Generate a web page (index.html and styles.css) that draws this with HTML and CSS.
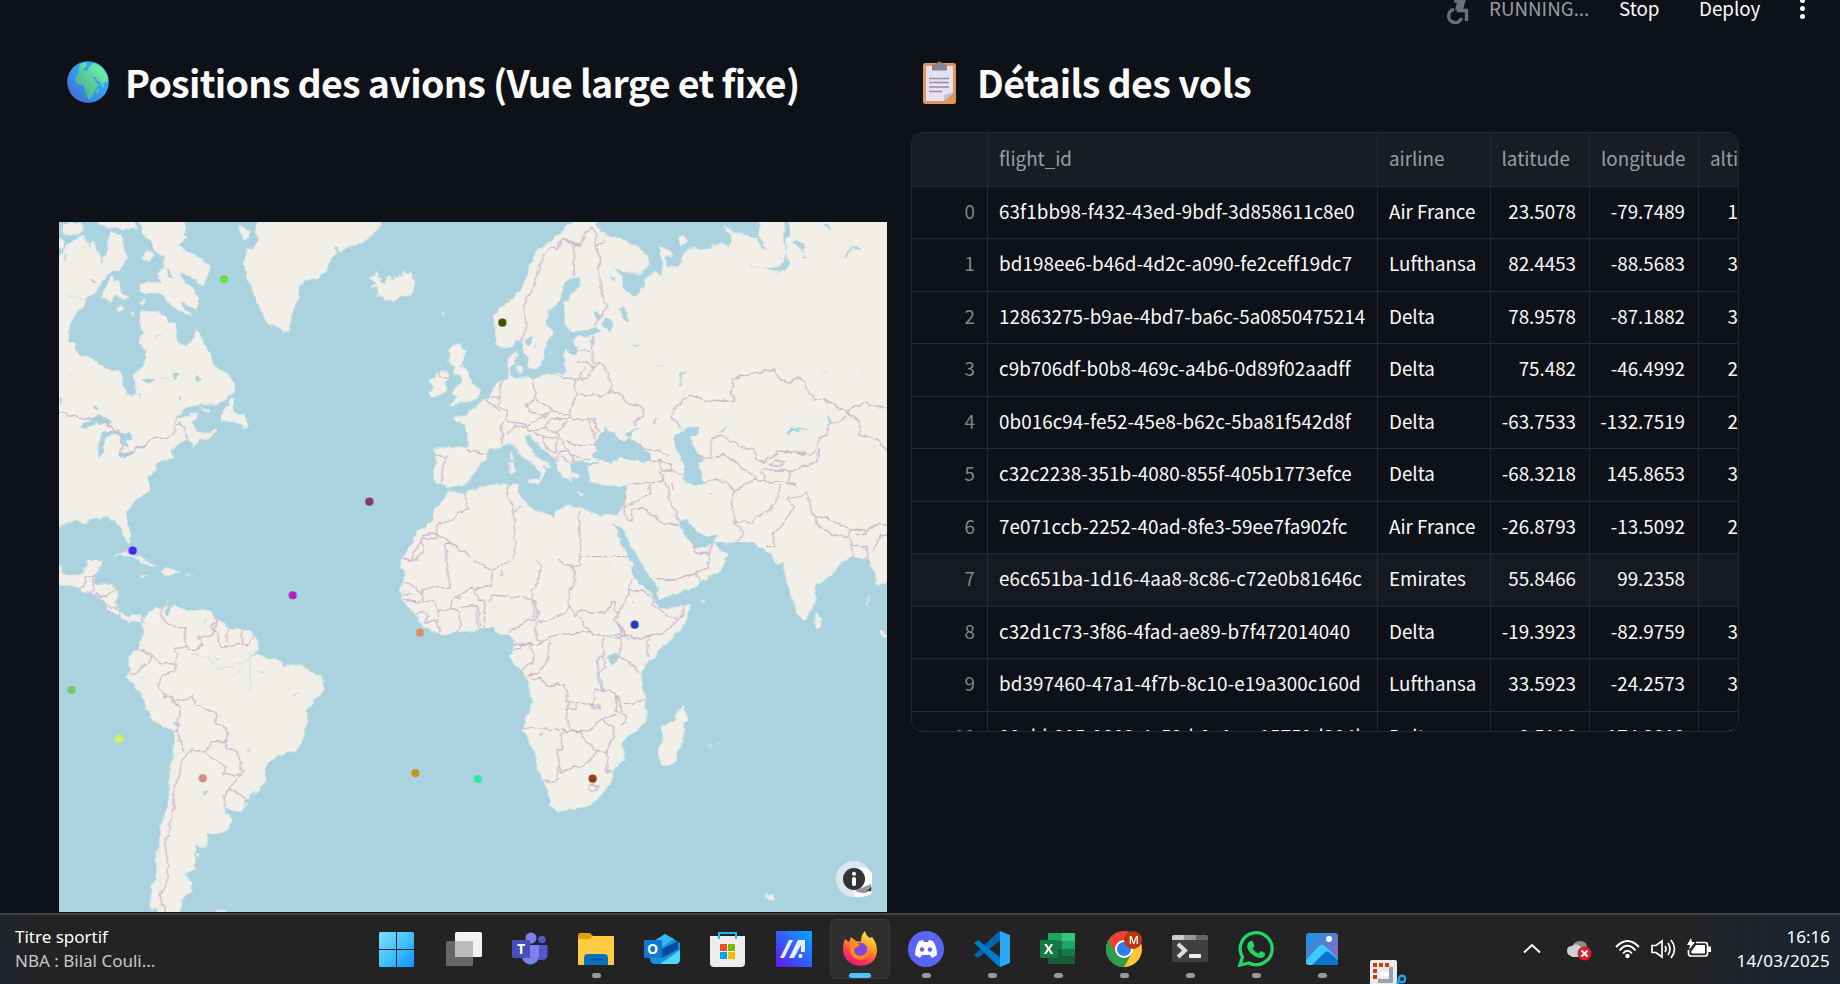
FILE: index.html
```html
<!DOCTYPE html>
<html lang="fr">
<head>
<meta charset="utf-8">
<title>Suivi des vols</title>
<link rel="stylesheet" href="styles.css">
</head>
<body>
<div class="screen">
<header class="toolbar">
  <svg class="runner" width="28" height="24" viewBox="0 0 28 24"><g fill="none" stroke="#6e6f75" stroke-width="3.4"><path d="M9 9.500A6.600 6.600 0 1 0 16.500 18"/><path d="M9 1L18.500 1 14 10.500H21.500V21"/></g><path d="M13-1h8l-3 11h-8z" fill="#6e6f75"/></svg>
  <span class="running">RUNNING...</span><span class="stop">Stop</span><span class="deploy">Deploy</span>
  <span class="dots"><i></i><i></i><i></i></span>
</header>
<main class="columns">
  <section>
    <h2 class="heading">
      <svg width="42" height="42" viewBox="0 0 42 42"><defs><linearGradient id="sea" x1="1" y1="0" x2="0" y2="1"><stop offset="0" stop-color="#35b8ff"/><stop offset=".5" stop-color="#309dee"/><stop offset="1" stop-color="#4b5fce"/></linearGradient><linearGradient id="soil" x1="1" y1="0" x2="0" y2="1"><stop offset="0" stop-color="#75ffae"/><stop offset="1" stop-color="#479f89"/></linearGradient></defs><circle cx="21" cy="21" r="20.800" fill="url(#sea)"/><path d="M13 3l6-2 1 4-3 2-2 4-4 2zM22 6l5-4q10 3 14 15l-1 4-4 1-2-3-2 2-4-5-5-1-2 2-2-2-4 1-3-2 4-5 4 1zM10 14l5-2 8 2 5 5 1 3 3 1-4 6-2 5-4 5-4-8-1-7-7-1-2-4zM31 27l1 2-2 4-1-2zM35 18l2 7-1 2-3-7z" fill="url(#soil)"/></svg>
      <span class="t1">Positions des avions (Vue large et fixe)</span>
    </h2>
    <div class="map">
    <svg width="828" height="690" viewBox="27 21 2484 2070">
      <defs>
        <clipPath id="upper"><path d="M0 0H2540V1036H0z"/></clipPath>
        <clipPath id="lower"><path d="M0 0H2540V1080H0z"/></clipPath>
        <filter id="rough" filterUnits="userSpaceOnUse" x="0" y="0" width="2540" height="2120" color-interpolation-filters="sRGB"><feTurbulence type="fractalNoise" baseFrequency=".045" numOctaves="2" seed="4"/><feDisplacementMap in="SourceGraphic" scale="17" xChannelSelector="R" yChannelSelector="G"/></filter>
      </defs>
      <rect x="27" y="21" width="2484" height="2070" fill="#aad3df"/>
      <g filter="url(#rough)">
      <g class="land" clip-path="url(#upper)">
        <path d="M262 5L398 5 410 45 402 58 412 72 385 90 405 108 440 120 460 138 484 160 472 190 458 212 440 200 425 190 400 175 385 172 392 190 420 210 447 250 442 285 430 280 400 262 388 262 425 298 400 292 360 272 350 250 325 230 285 235 270 222 272 208 300 202 335 205 325 185 318 178 345 155 340 130 320 110 300 80 280 60z"/>
        <path d="M10 140L40 110 50 90 75 70 100 60 112 75 115 100 125 75 140 95 155 140 165 120 175 85 178 55 190 50 215 60 220 90 230 130 215 160 185 170 165 185 150 210 135 235 110 245 108 262 80 295 60 330 55 380 75 385 85 420 120 425 160 455 185 465 215 468 218 510 232 535 247 550 262 535 257 500 250 475 275 460 288 435 285 405 265 385 278 355 270 325 270 287 325 290 345 305 355 325 378 325 380 365 405 392 430 375 440 340 455 370 478 410 490 450 535 480 553 500 555 530 530 550 500 568 450 570 415 575 385 605 365 630 400 605 440 592 445 605 428 620 440 645 465 655 485 650 495 635 502 650 480 665 450 675 428 697 424 680 410 670 385 688 365 705 372 730 345 735 320 745 315 770 295 785 300 825 275 845 250 860 228 890 232 920 243 960 240 985 222 965 210 935 190 915 170 908 130 910 105 925 75 915 50 925 10 952z"/>
        <path d="M10 60L35 72 42 85 38 100 10 98zM38 30L60 21 90 24 97 40 85 58 60 60 38 50zM133 5H255L262 45 240 38 225 45 200 38 175 38 150 32zM185 180L170 205 155 248 167 250 180 267 195 240 222 254 240 248 215 235 205 195 195 198zM198 280L215 270 220 282 204 292zM243 290L253 290 250 306 243 302zM283 115L292 103 308 112 308 125 296 142 280 130zM268 260L285 252 287 260 272 268z"/>
        <path d="M555 545L545 550 515 605 512 621 540 620 567 625 580 630 575 640 592 638 595 625 585 610 582 598 565 595 552 592 545 580zM445 578L475 585 480 592 462 590z"/>
        <path d="M625 5L1000 5 985 40 940 82 905 95 870 112 852 93 857 115 845 128 830 165 800 190 765 195 750 215 750 240 735 270 722 310 715 352 700 350 680 330 655 332 635 295 612 240 600 205 585 180 582 130 590 98 612 100 625 70 615 55zM565 38L578 30 600 50 598 64 585 72 568 60z"/>
        <path d="M958 192L975 178 982 167 985 182 998 190 990 200 1003 210 1015 178 1025 192 1035 182 1040 190 1050 180 1058 186 1063 165 1075 180 1082 172 1090 190 1095 207 1090 225 1070 243 1045 250 1030 260 1005 252 998 245 978 245 985 235 980 215 962 218 965 208 980 208 968 195z"/>
        <path d="M1172 465L1190 468 1196 485 1188 505 1190 530 1165 540 1145 545 1137 532 1148 515 1140 507 1140 490 1160 490 1160 475zM1210 390L1230 385 1232 402 1247 407 1240 435 1228 450 1250 460 1260 490 1275 510 1290 520 1288 545 1260 560 1230 565 1198 573 1210 555 1222 545 1203 537 1218 515 1235 500 1230 480 1208 474 1215 455 1195 440 1202 415 1198 402z"/>
        <path d="M1262 585L1250 590 1247 602 1212 605 1215 615 1240 630 1255 655 1255 690 1245 698 1165 697 1152 705 1158 735 1150 770 1157 803 1175 806 1195 820 1215 815 1242 808 1262 790 1285 755 1310 735 1312 705 1350 700 1375 685 1392 690 1405 715 1425 730 1445 748 1465 762 1472 782 1462 800 1478 790 1485 768 1480 752 1500 760 1495 742 1475 740 1455 715 1430 690 1427 665 1440 662 1460 682 1490 710 1515 730 1525 765 1535 780 1550 795 1567 800 1560 785 1590 795 1590 780 1565 770 1560 745 1575 740 1605 742 1615 770 1620 800 1660 815 1685 808 1710 820 1725 812 1728 850 1710 888 1695 897 1645 900 1610 885 1550 870 1520 890 1512 910 1450 880 1410 850 1405 830 1405 810 1375 808 1340 805 1260 825 1250 838 1205 830 1195 825 1185 850 1150 885 1145 920 1105 950 1075 1000 1052 1037 1052 1050 2530 1050 2530 5 2390 5 2215 5 2220 65 2205 75 2215 145 2205 165 2180 175 2145 160 2190 155 2210 120 2200 75 2205 5 2130 5 2125 65 2150 100 2145 105 2120 75 2085 55 2050 52 2020 30 2030 50 2045 60 2035 100 2025 85 1990 92 1960 105 1930 95 1905 110 1890 145 1875 155 1850 150 1845 125 1870 125 1860 105 1835 95 1830 100 1835 140 1835 180 1815 170 1785 195 1785 210 1770 225 1760 245 1730 235 1715 210 1715 185 1690 155 1720 170 1775 178 1797 150 1790 120 1765 95 1725 75 1665 60 1635 30 1650 5 1575 5 1545 40 1500 80 1460 105 1435 165 1420 210 1380 260 1345 280 1330 310 1340 370 1345 395 1370 402 1400 375 1415 380 1420 410 1435 430 1438 460 1455 460 1475 445 1485 410 1490 385 1512 350 1490 335 1493 290 1530 255 1543 205 1560 187 1590 190 1590 210 1560 245 1542 265 1545 335 1570 350 1640 340 1650 350 1620 362 1580 362 1570 375 1575 395 1583 400 1580 420 1560 415 1550 400 1540 425 1545 475 1505 475 1475 480 1455 495 1430 485 1400 490 1380 480 1380 460 1395 440 1405 410 1375 430 1375 490 1340 505 1320 545 1295 560z"/>
        <path d="M1480 790L1430 795 1440 805 1465 810zM1378 745L1390 738 1393 770 1378 775zM1385 708L1390 728 1382 734 1380 715zM1575 830L1605 835 1590 840zM1688 838L1705 832 1700 842 1692 844zM1400 450L1420 455 1415 475 1400 465zM188 1025L220 1010 270 1025 335 1055 280 1045 250 1025 205 1022zM110 1050L125 1037H155V1050z"/>
        <path d="M1885 68L1895 64 1912 75 1905 88 1890 90zM1175 290l10-2-2 20zM1505 405l-8 15 4-2z"/>
      </g>
      <g class="land" transform="translate(0 1035)" clip-path="url(#lower)">
        <path d="M5 -10L27 14 40 40 75 45 103 35 115 0V-8H157V0L150 30 135 45 133 72 185 75 203 90 197 130 205 150 235 175 250 160 272 165 280 185 240 185 235 188 210 175 205 165 172 150 170 135 145 108 90 90 70 78 27 75 5 70z"/>
        <path d="M262 -5L290 5 320 18 305 20 270 5zM268 42L292 45 275 50zM335 38L350 22 370 28 392 40 360 42 350 48zM410 42L428 44 412 48z"/>
        <path d="M275 185L300 155 315 145 335 145 355 122 350 140 345 155 355 165 362 150 370 133 400 147 440 150 480 152 495 175 525 190 540 207 595 208 615 235 630 265 605 290 620 283 650 290 695 305 700 317 760 318 800 345 818 350 824 385 800 415 772 450 770 500 758 540 740 573 690 585 655 610 647 630 648 660 620 700 585 745 570 758 520 745 535 765 544 790 530 812 500 822 475 822 472 855 455 862 437 855 435 925 410 935 405 945 427 970 425 990 400 1015 385 1070H325L318 1010 325 900 330 800 355 730 360 620 372 580 370 518 300 475 290 445 262 390 230 350 238 330 235 290 265 260 280 235z"/>
        <path d="M320 870h8l4 180h-28l-2-70 15-20zM440 880l14 2-8 10zM495 1052h32v14h-32z"/>
        <path d="M1052 -8V0L1063 45 1050 90 1060 125 1100 165 1105 185 1140 210 1175 224 1215 215 1275 218V-8z"/>
      </g>
      <g class="land" transform="translate(1260 1035)" clip-path="url(#lower)">
        <path d="M-12 -8H487L488 45 510 70 540 95 560 125 570 147 620 140 663 130 655 165 630 215 590 250 540 300 515 340 515 380 527 420 530 480 510 500 455 545 465 600 430 622 425 665 380 720 350 740 300 748 262 757 240 735 240 710 220 665 205 640 192 575 160 510 168 465 185 440 178 390 165 345 123 300 133 250 133 235 118 222 85 225 70 203 30 205-12 217z"/>
        <path d="M510 0V-8H768V0L750 35 690 65 680 80 570 120 565 118 557 70 530 40zM903 0V-8H1122V0L1100 30 1050 70 1035 80 1035 130 1015 165 1000 180 985 165 962 110 943 50 940 5 920 10zM1037 158L1055 180 1055 198 1035 206 1030 190zM1192 -8V0L1215 40 1220 75 1235 75 1265 60V-8zM1228 208L1265 232V242L1235 225zM642 437L655 480 645 485 640 530 615 605 600 620 580 618 568 605 563 570 578 540 573 500 615 480 625 455zM692 120l12 0-2 5-10 0zM888 1002l20 2 4 12-24 2zM714 558l12 0-6 5zM742 544l8 3-8 5zM1196 105l4 5-6 28-3-3z"/>
      </g>
      <g class="water">
        <path d="M378 325L420 322 440 340 432 370 405 392 385 378zM90 638L115 615 145 598 185 615 185 630 140 625 105 640zM145 675L165 650 205 645 210 655 165 668 162 710 150 730 145 710zM205 650L245 660 245 675 230 675 232 695 215 690zM205 720L240 708 258 712 225 728 210 732zM252 698L292 685 290 693 262 702zM130 572l12 0-2 14-8 0zM30 545l8 12-8 12zM368 475l18 2-5 15-12 0zM430 490l14-8 12 12-18 8zM275 492l38 0-20 14zM350 155l25 35-20-5zM115 185l25 18-8 2zM440 650l25-60 30 30 5 20-28 10zM45 115l5 15-8 10zM385 545l8 0 0 14-8-4zM265 535l10 3-8 12z"/>
        <path d="M1625 730L1640 705 1635 690 1648 660 1665 640 1690 650 1705 665 1700 672 1715 680 1740 670 1725 660 1770 630 1745 658 1738 672 1770 690 1800 715 1803 735 1785 740 1735 735 1710 725 1680 740zM1875 660L1910 638 1947 635 1945 658 1925 665 1930 690 1950 722 1968 740 1945 745 1960 785 1960 808 1930 812 1895 795 1905 755 1885 715 1870 680zM1605 742H1650L1640 750 1610 752 1615 810 1725 812 1725 850 1600 840 1570 805 1590 790 1600 775zM1655 330L1665 308 1685 312 1690 330 1680 348 1660 340zM1710 280L1722 275 1735 310 1732 322 1712 305zM1425 375l20-8 4 4-12 20-8 0zM1450 390l8-2-4 15zM1620 375l7 0-2 25zM1630 290l14 0 10 15-10 15-8-18zM1678 180l18 8-4 10zM1745 385l20 5 2 5-10 0zM2208 655L2222 640 2282 642 2225 650 2215 665zM2240 715l30-2-10 8zM1885 920L1910 915 1935 945 1970 965 2000 958 2000 975 1965 995 1935 1000 1920 980 1890 940zM1990 980L2080 985 2105 980 2170 1020 2170 1037H2020L2035 1020 1995 990zM1690 925L1715 940 1770 1037H1740L1705 965zM2380 1037L2400 1030 2450 1025 2445 1037zM2245 75L2260 85 2262 125 2275 132 2255 105 2225 85zM2385 125l18-35 2 10-18 32zM2405 95l35 5-20 8zM2320 24l20 5-2 18zM1890 470l22-6-15 15-6 18 4 18-8-5zM1810 615l14-8-14 22zM2000 655l14-14 20 0-20 8zM1980 832l10 3-5 5zM2450 565l12 3-5 8zM2330 595l10 20 15 8-20 0z"/>
        <path d="M348 1183l12 5-3 18-10-5zM375 1515l12 15-10 2zM458 1728l15 0-2 12-12-4zM500 1333l8 2-4 6zM628 1367l10 5-3 5zM725 1440l22-3-15 7zM590 1612l12-12-6 14zM580 1760l40-35-20 45-15-8zM460 1216l8 2-5 8zM1470 1555l16 3-12 6zM1743 1160l8 2-6 5zM1675 1320l28-8 5 15-20 22-15-10zM1644 1320q2 70 22 105l-6-2q-20-35-16-103zM1700 1440l8 0 10 55-6-5zM1730 1260l10 22-8-10z"/>
      </g>
      <path class="river" d="M425 1317q65 10 70 35t70-8l70-30M595 1335l-60 60M600 1310v120M430 470l18 16M335 490l30 6M315 365l18-5M55 480l12-4M395 340l8 4M40 235l60 20M2095 150l35 8M1820 455l28-8M1840 430l20-15M2310 480l20-12M2440 465l-8 22M1625 200l20 20M1655 1290q-5-20 12-35M1675 1400l12 8M1685 1045l-10 15"/>
      <g class="edge" clip-path="url(#upper)">
        <path d="M10 594H50L62 602 90 610 140 608 185 640 215 665 218 700 205 725 225 722 255 710 260 695 290 690 308 670H350L370 655 380 630 390 626 403 632 405 660 410 668M1170 465L1175 490 1190 494M1155 720L1187 725 1177 760 1175 803M1245 838L1253 880 1225 895 1200 915 1160 930V970H1115L1083 1033H1052M1118 958L1160 955 1262 1024M1118 960V1005L1100 1033M1250 705L1305 716M1187 985L1192 1050M1187 985H1205"/>
        <path d="M1410 378L1428 345 1423 270 1430 240 1447 230 1480 120 1510 96 1525 100 1538 70 1570 88 1573 180M1538 70L1565 88 1595 90 1605 50 1625 40 1640 55 1637 100 1652 130 1645 150 1655 235 1670 275 1632 335M1628 365L1626 440 1660 448 1665 460 1685 510 1680 530M1580 442L1605 440 1628 455 1655 445M1620 410L1585 405M1605 455L1590 490 1570 493 1525 482M1570 493L1580 535 1560 595M1590 495L1620 480 1630 455M1580 540L1625 540 1660 548 1675 532 1700 530 1725 560 1780 580 1780 605 1755 618 1755 630M1450 490L1457 550 1428 570 1435 590 1480 600 1505 590 1560 600 1555 610 1605 612 1620 610 1650 650M1457 555L1490 570 1508 588M1355 500L1345 575 1370 590 1365 620 1395 622 1435 630 1490 600M1300 550L1350 588M1325 545L1348 548M1355 690L1358 650 1350 640 1360 622M1395 632L1380 650 1370 655M1395 635L1430 635 1440 650 1485 640 1500 612 1555 610M1485 640L1520 655 1555 615M1475 665L1490 700 1518 715 1520 670 1475 665 1440 645M1520 655L1560 715 1620 735M1520 740L1530 710 1555 705M1535 720L1550 740 1570 738 1558 710M1545 680L1590 695 1640 685 1628 655 1615 610M1630 612L1640 650 1630 662M1740 808L1840 800 1840 780 1825 765M1730 810L1720 880 1735 920 1750 910 1745 885 1770 875 1845 928H1885M1800 808L1798 840 1730 875M1845 800L1860 840 1855 855 1880 890 1888 925M1780 698L1820 705 1860 725M1805 735L1865 745 1860 765 1895 780M1828 740L1835 765 1865 765M1865 805L1870 825M1895 642L1880 625 1865 605 1875 575 1920 540 1980 560 2010 555 2055 560 2040 540 2050 510 2050 490 2160 465 2175 465 2185 485 2210 505 2250 485 2295 555 2320 550 2390 590 2440 562 2485 575 2525 582M1390 1030L1395 990 1390 870 1370 850 1375 808M1395 890L1415 870M1588 890L1590 1037M1590 1025H1740M1940 720L1970 730 1985 725V670L2020 660 2070 695 2110 700 2120 730 2145 745 2150 730 2180 720 2180 708 2295 715 2305 670 2330 660 2335 630 2370 620 2385 600M1960 802L1995 790 2030 805 2055 830 2110 795 2145 800 2190 800 2235 810M1990 730L2020 715 2060 745 2120 790M2135 770L2145 795M2140 765L2215 765 2220 775 2215 800 2240 820M2160 750L2175 735 2205 742 2190 755 2160 750M2055 830L2045 860 2055 920 2110 920 2120 905 2160 885 2185 850 2190 810M2055 920L2080 960 2060 980M2150 995H2175L2165 955 2190 940 2230 880 2215 850 2250 845 2270 830 2280 885 2300 905 2340 912 2400 945 2450 940 2490 925 2525 935M2300 905L2295 925 2350 960 2395 965 2400 945M2400 965L2410 1035M2400 985L2450 1000 2455 1037M2415 945L2445 942 2445 960 2415 958M2470 1010L2490 960 2525 955M2220 770L2300 740 2310 700M2385 590L2430 620 2430 660 2480 675 2525 720M1925 985L1940 1015H1978L1985 985M1940 1015L1980 1022 1975 1050M1635 95L1665 75"/>
      </g>
      <g class="edge" transform="translate(0 1035)">
        <path d="M103 48H135M105 48L108 70 88 90M130 50V85L118 102M135 100L155 110 200 90M175 140L200 145M208 170L210 158M275 180L282 185M352 130L335 145 333 165 345 190 370 195 380 203H407L403 235 410 262 375 265 380 290 375 335 340 345 322 380 345 410 365 408 368 425 400 420 430 408 435 435 495 458 498 490 520 492 533 520 528 545H480L468 575 440 575 425 568 410 585 395 600 393 640 375 670 370 700 375 745 358 780 360 810 348 850 345 880 355 915 350 965 330 1005 335 1035 345 1040V1070M260 265L305 285 300 305 265 330 260 342 240 340M305 285L335 310 375 312M368 425L388 440 382 510 370 518M382 510L395 560 402 580M468 575L490 600 530 620 520 640 550 650 570 640 575 600 555 570H530V540M575 625L582 635 538 685 525 705 520 740M538 685L565 700 590 720 582 740M407 262L430 270 460 250 442 232 490 225 500 175 485 200 490 215 505 220 505 250 515 265 550 255 600 250 610 228M540 205L530 220 530 245M575 208V250M1052 0H1105M1190 0L1200 82 1120 85 1115 105 1080 70 1060 68M1115 90L1120 125 1060 118M1058 103H1090M1125 125L1155 125 1165 150 1225 150 1230 160 1230 215M1165 150L1160 190 1172 210 1170 222M1100 160L1120 155 1133 165 1128 190 1150 180 1165 188M1200 150L1210 120 1262 85M1230 140H1262M1355 30V45"/>
      </g>
      <g class="edge" transform="translate(1260 1035)">
        <path d="M10 0L65 32 120 0M65 32L60 75 10 90 25 120 50 125 40 165 42 200M0 85H10M0 138H18L20 205M25 140L30 200M55 125L65 105 185 115 195 155 190 180 155 190 120 215M200 0L210 15 205 65 185 95 190 120 205 155 195 200 200 235 215 250M260 0L313 22V75L297 95V130L315 170 330 150 370 160 395 155 405 160 425 125 435 125 435 150 445 160 435 180 470 225M205 185L260 175 300 140M325 170L370 225 465 225 510 238 585 215 638 160V135M330 0V18H313M445 160L475 105 480 60 500 50M475 95L520 90 545 110 555 125 545 135 620 180M540 235L532 250 535 290M133 253H208L245 230 270 220 365 215M135 268L155 265 155 253H180L190 275 190 305 155 330M245 235L235 290 205 340 170 345M170 355H215L232 383 265 370 285 375 295 425 340 430 385 435 388 450 370 440 375 390 400 390 385 365 380 300 400 290 400 235M400 235H450L455 225 455 250 445 290 490 315 510 340M410 293L445 290M400 295L405 325 385 340M455 430L490 430 525 418M400 390L440 400 435 455 465 465 465 490 450 495M440 400L455 455M295 445V425M318 425V448H290V480L305 512 355 512 395 480 430 500 430 530 410 575 415 640 405 630 410 620 425 635 405 642M160 503L290 512M275 515V570H265L263 660 250 670 220 658M278 515L330 515 350 545 385 572 410 575M265 610L275 640 310 618 340 620 385 572M355 680L370 670 385 680 370 695 355 685M395 475L440 465M560 55L615 60 675 38 690 65M675 38L715 20V0M460 225L440 190M1190 0L1200 12"/>
      </g>
      </g>
      <g class="pins">
        <circle cx="522" cy="193" r="12.300" fill="#6fd74a"/><circle cx="958" cy="860" r="12.300" fill="#833573"/><circle cx="248" cy="1007" r="12.300" fill="#4e22f5"/><circle cx="1357" cy="323" r="12.300" fill="#3f5300"/><circle cx="728" cy="1141" r="12.300" fill="#aa21bf"/><circle cx="1110" cy="1253" r="12.300" fill="#da925d"/><circle cx="65" cy="1425" r="12.300" fill="#76c670"/><circle cx="207" cy="1571" r="12.300" fill="#d6f064"/><circle cx="458" cy="1690" r="12.300" fill="#d18d80"/><circle cx="1096" cy="1674" r="12.300" fill="#c69225"/><circle cx="1284" cy="1692" r="12.300" fill="#2be8a6"/><circle cx="1754" cy="1229" r="12.300" fill="#233db8"/><circle cx="1628" cy="1691" r="12.300" fill="#963819"/>
      </g>
      <g transform="translate(1260 1035)"><circle cx="1152" cy="957" r="54" fill="#d8e8ee"/><path d="M1152 925q40-10 54 15v60q-20 15-54 10z" fill="#fff"/><path d="M1155 992l48-20 2 15-18 12q-20 2-32-7z" fill="#97959b"/><path d="M1190 994l14-14v14z" fill="#3a383c"/><circle cx="1152" cy="957" r="33" fill="#333"/><circle cx="1152" cy="941" r="6" fill="#fff"/><rect x="1146" y="951" width="12" height="27" rx="5" fill="#fff"/></g>
    </svg>
    </div>
  </section>
  <section>
    <h2 class="heading second">
      <svg width="33" height="43" viewBox="0 0 33 43"><rect y="2" width="33" height="41" rx="2.500" fill="#e0975f"/><path d="M3 5H30V32L21 40H3z" fill="#e6e1f3"/><path d="M21 40V34L30 31z" fill="#c6bddb"/><path d="M6 17.500H26M6 21.500H26M6 26H26M6 30.500H19" stroke="#96909f" stroke-width="1.500"/><path d="M9 4L14 2Q16-1 19 2L24 4V9.500H9z" fill="#8b8391"/></svg>
      <span class="t2">Détails des vols</span>
    </h2>
    <div class="table">
      <div class="row head"><span></span><span>flight_id</span><span>airline</span><span>latitude</span><span>longitude</span><span>alti</span></div>
      <div class="row"><span>0</span><span>63f1bb98-f432-43ed-9bdf-3d858611c8e0</span><span>Air France</span><span>23.5078</span><span>-79.7489</span><span>1</span></div>
      <div class="row"><span>1</span><span>bd198ee6-b46d-4d2c-a090-fe2ceff19dc7</span><span>Lufthansa</span><span>82.4453</span><span>-88.5683</span><span>3</span></div>
      <div class="row"><span>2</span><span>12863275-b9ae-4bd7-ba6c-5a0850475214</span><span>Delta</span><span>78.9578</span><span>-87.1882</span><span>3</span></div>
      <div class="row"><span>3</span><span>c9b706df-b0b8-469c-a4b6-0d89f02aadff</span><span>Delta</span><span>75.482</span><span>-46.4992</span><span>2</span></div>
      <div class="row"><span>4</span><span>0b016c94-fe52-45e8-b62c-5ba81f542d8f</span><span>Delta</span><span>-63.7533</span><span>-132.7519</span><span>2</span></div>
      <div class="row"><span>5</span><span>c32c2238-351b-4080-855f-405b1773efce</span><span>Delta</span><span>-68.3218</span><span>145.8653</span><span>3</span></div>
      <div class="row"><span>6</span><span>7e071ccb-2252-40ad-8fe3-59ee7fa902fc</span><span>Air France</span><span>-26.8793</span><span>-13.5092</span><span>2</span></div>
      <div class="row hover"><span>7</span><span>e6c651ba-1d16-4aa8-8c86-c72e0b81646c</span><span>Emirates</span><span>55.8466</span><span>99.2358</span><span></span></div>
      <div class="row"><span>8</span><span>c32d1c73-3f86-4fad-ae89-b7f472014040</span><span>Delta</span><span>-19.3923</span><span>-82.9759</span><span>3</span></div>
      <div class="row"><span>9</span><span>bd397460-47a1-4f7b-8c10-e19a300c160d</span><span>Lufthansa</span><span>33.5923</span><span>-24.2573</span><span>3</span></div>
      <div class="row"><span>10</span><span>00abb395-9802-4c53-b9e1-ae15759d204b</span><span>Delta</span><span>-8.5116</span><span>-174.2819</span><span>3</span></div>
    </div>
  </section>
</main>
<footer class="taskbar">
  <div class="news"><div class="n1">Titre sportif</div><div class="n2">NBA : Bilal Couli...</div></div>
  <div class="apps">
    <div class="app"><svg viewBox="0 0 36 36"><defs><linearGradient id="win" x1="0" y1="0" x2="1" y2="1"><stop offset="0" stop-color="#7fdcff"/><stop offset=".5" stop-color="#42c3fc"/><stop offset="1" stop-color="#0a93ff"/></linearGradient></defs><path d="M-1 2.500Q-1 1 .5 1H16V18H-1zM17 1H32.500Q34 1 34 2.500V18H17zM-1 19H16V36H.5Q-1 36-1 34.500zM17 19H34V34.500Q34 36 32.500 36H17z" fill="url(#win)"/></svg></div>
    <div class="app"><svg viewBox="0 0 36 36"><rect x="9" y="1" width="27" height="25" rx="1.500" fill="#f3f3f3"/><rect y="10" width="27" height="25" rx="1.500" fill="#666" /><path d="M9 10H27V26H9z" fill="#bdbdbd"/></svg></div>
    <div class="app"><svg viewBox="0 0 36 36"><circle cx="19" cy="7" r="5.500" fill="#7b83eb"/><circle cx="30" cy="8.500" r="3.800" fill="#5059c9"/><path d="M26 14H35.500V24q0 5-6 5h-3z" fill="#5059c9"/><path d="M9 14H27V25q-1 8-8.500 8.500Q11 33 10 26z" fill="#7b83eb"/><rect y="9" width="18" height="18" rx="1" fill="#484fb8"/><text x="5" y="23" class="letter">T</text></svg></div>
    <div class="app run"><svg viewBox="0 0 36 36"><path d="M0 4Q0 2 2 2H12L16 6H36V12H0z" fill="#dfa00c"/><path d="M0 8H12L15 5H36V34H0z" fill="#ffcc42"/><path d="M6 34V27Q6 23 10 23H26Q30 23 30 27V34z" fill="#0870bd"/><path d="M11 28.500H25" stroke="#07518e" stroke-width="1.500"/></svg><i></i></div>
    <div class="app"><svg viewBox="0 0 36 36"><path d="M6 12L21 3 36 12V28Q36 33 31 33H12Q6 33 6 28z" fill="#1493df"/><path d="M12 9L21 3 30 8 18 16z" fill="#35b8f1"/><path d="M18 18L34 10V18L18 27z" fill="#0b4b9c"/><path d="M16 33L36 19V28Q36 33 31 33z" fill="#50d9ff"/><rect y="9" width="18" height="18" rx="1" fill="#0f78d4"/><text x="3" y="23" class="letter">O</text></svg></div>
    <div class="app"><svg viewBox="0 0 36 36"><path d="M0 5H35V32Q35 36 31 36H4Q0 36 0 32z" fill="#ededed"/><path d="M9 8V2H26V8" fill="none" stroke="#29b7e9" stroke-width="2"/><path d="M10 13h7v7h-7z" fill="#f25022"/><path d="M18 13h7v7h-7z" fill="#7fba00"/><path d="M10 21h7v7h-7z" fill="#00a4ef"/><path d="M18 21h7v7h-7z" fill="#ffb900"/></svg></div>
    <div class="app"><svg viewBox="0 0 36 36"><defs><linearGradient id="asus" x1="1" y1="0" x2="0" y2="1"><stop stop-color="#05aaff"/><stop offset="1" stop-color="#6115f4"/></linearGradient></defs><path d="M0 0h36v36H0z" fill="url(#asus)"/><path d="M4 27L13 9H17L8 27zM13 27L22 9H29V21H25V14L18 27z" fill="#e7edff"/><circle cx="24.500" cy="25" r="2" fill="#fff"/></svg></div>
    <div class="app active"><svg viewBox="0 0 36 36"><defs><linearGradient id="fox" x1=".8" y1="0" x2=".3" y2="1"><stop stop-color="#fff44f"/><stop offset=".4" stop-color="#ff9a22"/><stop offset=".75" stop-color="#ff3750"/><stop offset="1" stop-color="#e31587"/></linearGradient></defs><path d="M3 8L7 11 9 6 14 10Q18 11 19 10 19 4 23 0 24 5 28 7L30 6Q35 12 35 20 34 34 18 35 2 33 1 19 1 12 3 8z" fill="url(#fox)"/><circle cx="18.500" cy="19" r="7.200" fill="#8147d8"/><path d="M8 13Q13 10 18 14L12 18Q12 24 18 25 25 24 26 17 28 27 19 29 8 28 8 18z" fill="#ff8b20"/></svg><i></i></div>
    <div class="app run"><svg viewBox="0 0 36 36"><circle cx="18" cy="18" r="18" fill="#5865f2"/><path d="M11 10L15 9 16 11H20L21 9 25 10Q29 16 29 24L24 27 22 24H14L12 27 7 24Q7 16 11 10z" fill="#fff"/><circle cx="14" cy="18.500" r="2.200" fill="#5865f2"/><circle cx="22" cy="18.500" r="2.200" fill="#5865f2"/></svg><i></i></div>
    <div class="app run"><svg viewBox="0 0 36 36"><path d="M0 24L4 27 27 9V0L24 1z" fill="#0065a9"/><path d="M0 12L4 9 27 27V36L24 35z" fill="#007acc"/><path d="M26 0L36 4V32L26 36z" fill="#2aa8f5"/></svg><i></i></div>
    <div class="app run"><svg viewBox="0 0 36 36"><path d="M8 3Q8 2 9 2H22V33H9Q8 33 8 32z" fill="#185c37"/><path d="M8 3Q8 2 9 2H22V10H8z" fill="#21a366"/><path d="M22 2H34Q35 2 35 3V10H22z" fill="#33c481"/><path d="M8 10H22V18H8z" fill="#107c41"/><path d="M22 10H35V18H22z" fill="#21a366"/><path d="M22 18H35V25H22z" fill="#107c41"/><path d="M8 25H35V32Q35 33 34 33H8z" fill="#185c37"/><rect y="9" width="18" height="18" rx="1" fill="#107c41"/><text x="4" y="23" class="letter">X</text></svg><i></i></div>
    <div class="app run"><svg viewBox="0 0 36 36"><circle cx="18" cy="18" r="18" fill="#ea4335"/><path d="M2.400 9L10.200 22.500 18 27 25.800 22.500 18 36A18 18 0 0 1 2.400 9z" fill="#2f9e4c"/><path d="M18 36L25.800 22.500 25 13H35.200A18 18 0 0 1 18 36z" fill="#fcc934"/><circle cx="18" cy="18" r="9" fill="#fff"/><circle cx="18" cy="18" r="7" fill="#2f7df0"/><circle cx="27" cy="9" r="9" fill="#c0350f"/><text x="22.800" y="13" class="small">M</text></svg><i></i></div>
    <div class="app run"><svg viewBox="0 0 36 36"><path d="M0 6Q0 4 2 4H34Q36 4 36 6V29Q36 31 34 31H2Q0 31 0 29z" fill="#404040"/><path d="M0 9V6Q0 4 2 4H12V9z" fill="#ccc"/><path d="M12 4H24V9H12z" fill="#999"/><path d="M24 4H34Q36 4 36 6V9H24z" fill="#666"/><path d="M6 13L13 19.500 6 26" fill="none" stroke="#ddd" stroke-width="4"/><rect x="17" y="23" width="12" height="4" rx="1" fill="#eee"/></svg><i></i></div>
    <div class="app run"><svg viewBox="0 0 36 36"><path d="M2 34L4.500 26A16 16 0 1 1 11 32z" fill="none" stroke="#25d366" stroke-width="3.300"/><path d="M10 12Q13 8 15 11L16.500 15 14.500 17.500Q17 21 20.500 22.500L23 20 27 22Q27.500 27 22 27 12 25 9 16z" fill="#25d366"/></svg><i></i></div>
    <div class="app run"><svg viewBox="0 0 36 36"><defs><linearGradient id="ph" x1="0" y1="0" x2="1" y2="1"><stop stop-color="#1597e6"/><stop offset="1" stop-color="#9d63bd"/></linearGradient></defs><rect x="2" y="2" width="32" height="32" rx="3" fill="url(#ph)"/><path d="M2 29L15 15Q18 12 21 15L34 28V31Q34 34 31 34H5Q2 34 2 31z" fill="#3bcaff"/><path d="M8 34L20 22Q23 19 26 22L34 29V31Q34 34 31 34z" fill="#0875d1"/><circle cx="25" cy="8" r="3" fill="#fff"/></svg><i></i></div>
  </div>
  <svg class="snip" width="36" height="24" viewBox="0 0 36 24"><rect width="27" height="30" rx="2" fill="#e9ecef"/><path d="M5 19V5H20" fill="none" stroke="#d83b01" stroke-width="4" stroke-dasharray="4 2"/><path d="M8 21H21V7" fill="none" stroke="#9aa3ab" stroke-width="4"/><path d="M10 14H19" stroke="#fff" stroke-width="5"/><circle cx="32" cy="19" r="3.200" fill="none" stroke="#22a2e8" stroke-width="2.500"/><path d="M29 21L27 24" stroke="#22a2e8" stroke-width="3"/></svg>
  <div class="tray">
    <svg width="18" height="24" viewBox="0 0 18 24"><path d="M1 15.500L9 8 17 15.500" fill="none" stroke="#fff" stroke-width="2"/></svg>
    <svg class="cloud" width="26" height="24" viewBox="0 0 26 24"><path d="M6 8Q8 4 13 4 19 4 20 9L17 17H6z" fill="#8e8e8e"/><path d="M4 19Q0 18 0 14 0 9 5 9 9 5 14 10L13 20H5z" fill="#cfcfcf"/><circle cx="17.500" cy="16.500" r="7" fill="#d81f2a"/><path d="M14.500 13.500L20.500 19.500M20.500 13.500L14.500 19.500" stroke="#fff" stroke-width="2"/></svg>
    <svg class="wifi" width="25" height="24" viewBox="0 0 25 24"><g fill="none" stroke="#fff" stroke-width="1.900"><path d="M1 10Q12.500-2 24 10M4.500 13.500Q12.500 4 20.500 13.500M8 16.500Q12.500 11 17 16.500"/></g><circle cx="12.500" cy="19" r="2.200" fill="#fff"/></svg>
    <svg width="25" height="24" viewBox="0 0 25 24"><g fill="none" stroke="#fff" stroke-width="1.700"><path d="M1 8.500H5L11 4V20L5 15.500H1zM14 9Q16 12 14 15M17 6Q21 12 17 18M20 3Q27 12 20 21"/></g></svg>
    <svg width="25" height="24" viewBox="0 0 25 24"><path d="M9 5.500H18Q20.500 5.500 20.500 8V16.500Q20.500 19 18 19H4Q1.500 19 1.500 16.500V13" fill="none" stroke="#fff" stroke-width="1.700"/><path d="M9 8H18V16.500H4.500V14z" fill="#fff"/><path d="M21 9.500H24V15H21z" fill="#fff"/><path d="M4 1L0 8H3L2 13 8 5H5z" fill="#fff"/></svg>
    <div class="clock"><div class="hour">16:16</div><div class="date">14/03/2025</div></div>
  </div>
</footer>
</div>
</body>
</html>
```
FILE: styles.css
```css
* { box-sizing: border-box; }
body { margin: 0; background: #0e1117; color: #fafafa; font-family: "Noto Sans CJK JP", sans-serif; }
.screen { width: 1840px; height: 984px; overflow: hidden; display: flex; flex-direction: column; }
.toolbar { height: 48px; padding-left: 1445px; display: flex; align-items: flex-start; font-size: 18.800px; line-height: 16px; }
.toolbar span { white-space: nowrap; flex: none; }
.runner { flex: none; }
.running { color: #9b9ca3; margin-left: 16px; width: 130px; }
.stop { width: 80px; }
.deploy { width: 101px; }
.toolbar .dots { display: flex; flex-direction: column; gap: 3px; margin-top: -2px; }
.dots i { width: 5px; height: 5px; border-radius: 50%; background: #fafafa; }
.columns { height: 865px; padding-left: 59px; display: grid; grid-template-columns: 828px 828px; column-gap: 24px; }
.heading { margin: 0; height: 84px; padding: 13px 0 0 8px; display: flex; align-items: flex-start; gap: 16px; font-size: 37.600px; line-height: 41px; font-weight: 700; white-space: nowrap; }
.heading svg { flex: none; overflow: visible; }
.second { padding-left: 12px; gap: 21px; }
.t1 { letter-spacing: -.700px; }
.t2 { letter-spacing: -.650px; }
.map { margin-top: 90px; height: 690px; }
.map svg { display: block; }
.land { fill: #f2efe9; stroke: #cfe3e3; stroke-width: 2; stroke-linejoin: round; }
.water { fill: #aad3df; }
.river { fill: none; stroke: #aad3df; stroke-width: 3; stroke-opacity: .5; }
.edge { fill: none; stroke: #cdb8cb; stroke-width: 4; stroke-linejoin: round; }
.table { height: 600px; border: 1px solid #26292f; border-radius: 12px; overflow: hidden; font-size: 18.800px; }
.row { display: grid; grid-template-columns: 76px 390px 112.500px 99.500px 109px 39px; height: 52.500px; line-height: 48px; white-space: nowrap; }
.row span { border-right: 1px solid #26292f; border-bottom: 1.500px solid #26292f; text-align: right; padding-right: 13px; }
.row span:nth-child(1) { color: #84868b; padding-right: 12px; }
.row span:nth-child(2), .row span:nth-child(3) { text-align: left; padding: 0 0 0 11px; }
.row span:nth-child(2) { letter-spacing: .080px; }
.row span:nth-child(6) { border-right: 0; text-align: left; padding: 0 0 0 28.500px; }
.row.head { height: 53.500px; background: #1a1c24; line-height: 49px; }
.row.head span { color: #9b9ca1; text-align: left; padding: 0 0 0 11px; letter-spacing: 0; }
.hover { background: #16191f; }
.taskbar { height: 71px; border-top: 2px solid #434343; background: linear-gradient(90deg, #20242a 0, #232323 40px, #232323 1680px, #1d232e 1780px); display: flex; font-family: "Noto Sans", "Open Sans", sans-serif; color: #fff; }
.news { width: 365px; flex: none; padding: 10px 0 0 15px; font-size: 17px; line-height: 24px; }
.n2 { color: #c8c8c8; }
.apps { display: flex; flex: none; }
.app { width: 66px; height: 69px; display: flex; flex-direction: column; align-items: center; padding-top: 16px; }
.app svg { width: 36px; height: 36px; flex: none; overflow: visible; }
.app.run i { width: 9px; height: 5px; border-radius: 3px; background: #9a9a9a; margin-top: 6px; }
.app.active { width: 60px; height: 60px; margin: 4px 3px 0; padding-top: 12px; background: #2e2e2e; border-radius: 6px; box-shadow: inset 0 0 0 1px #3a3a3a; }
.active i { width: 22px; height: 5px; border-radius: 3px; background: #4cc2ff; margin-top: 6px; }
.letter { font: 700 14px "Open Sans", sans-serif; fill: #fff; }
.small { font: 600 11px "Open Sans", sans-serif; fill: #fff; }
.snip { margin: 45px 0 0 15px; flex: none; }
.tray { flex: 1; display: flex; align-items: flex-start; gap: 11px; padding: 22px 10px 0 117px; }
.tray svg { flex: none; }
.cloud { margin-left: 15px; }
.wifi { margin-left: 11px; }
.clock { margin: -12px 0 0 auto; text-align: right; font-size: 17px; line-height: 24px; }
.date { letter-spacing: .300px; }
```
